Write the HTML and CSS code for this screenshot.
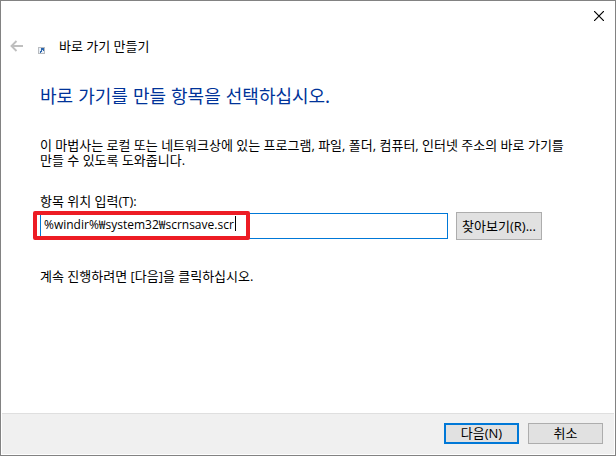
FILE: index.html
```html
<!DOCTYPE html>
<html lang="ko">
<head>
  <meta charset="UTF-8" />
  <meta name="viewport" content="width=device-width, initial-scale=1.0"/>
  <title>바로 가기 만들기</title>
  <link rel="stylesheet" href="styles.css">
</head>
<body>
  <form class="wizard">
    <div class="title-bar">
      <button type="button" class="close-btn" aria-label="닫기">
        <svg width="10" height="10" viewBox="0 0 10 10"><path d="M0 0L10 10M10 0L0 10" stroke="#000" stroke-width="1.2"/></svg>
      </button>
    </div>

    <header class="header">
      <button type="button" class="back-btn" aria-label="뒤로" disabled>
        <svg width="13" height="12" viewBox="0 0 13 12"><path d="M13 6H1.5M6.5 1L1.5 6L6.5 11" fill="none" stroke="#bfbfbf" stroke-width="1.9"/></svg>
      </button>
      <svg class="shortcut-icon" width="7" height="7" viewBox="0 0 7 7">
        <path d="M0 0H7V7H0Z" fill="#b9bcc0"/>
        <path d="M1 1H6V6H1Z" fill="#e9f0f8"/>
        <path d="M3 1H6V4H5V3H4V5H3V6H2V4H3Z" fill="#2b66ae"/>
      </svg>
      <span class="title">바로 가기 만들기</span>
    </header>

    <main class="content">
      <h1>바로 가기를 만들 항목을 선택하십시오.</h1>
      <p>이 마법사는 로컬 또는 네트워크상에 있는 프로그램, 파일, 폴더, 컴퓨터, 인터넷 주소의 바로 가기를 만들 수 있도록 도와줍니다.</p>

      <label for="location">항목 위치 입력(T):</label>
      <div class="input-row">
        <div class="field">
          <input type="text" id="location" value="%windir%₩system32₩scrnsave.scr" spellcheck="false" />
          <span class="highlight"><span class="caret"></span></span>
        </div>
        <button type="button" class="browse-btn">찾아보기(R)...</button>
      </div>

      <p>계속 진행하려면 [다음]을 클릭하십시오.</p>
    </main>

    <footer class="footer">
      <button type="submit" class="next-btn">다음(N)</button>
      <button type="button">취소</button>
    </footer>
  </form>
</body>
</html>
```
FILE: styles.css
```css
* {
  box-sizing: border-box;
}

body {
  margin: 0;
  background-color: #fff;
  color: #000;
  font-family: "Open Sans", "Noto Sans CJK KR", sans-serif;
  font-size: 13px;
  line-height: 15px;
}

.wizard {
  display: flex;
  flex-direction: column;
  min-height: 100vh;
  border: 1px solid #828282;
}

.title-bar {
  display: flex;
  justify-content: flex-end;
  height: 30px;
}

button {
  height: 21px;
  width: 75px;
  padding: 0;
  border: 1px solid #adadad;
  background-color: #e1e1e1;
  color: #000;
  font: inherit;
}

.close-btn,
.back-btn {
  display: flex;
  align-items: center;
  justify-content: center;
  border: none;
  background: none;
}

.close-btn {
  width: 32px;
  height: 30px;
}

.back-btn {
  width: 30px;
  height: 30px;
}

.header {
  display: flex;
  align-items: center;
  height: 30px;
}

.shortcut-icon {
  margin: 8px 14px 0 7px;
}

.content {
  flex: 1;
  padding: 22px 39px;
}

h1 {
  margin: 0 0 31px;
  color: #003399;
  font-family: "Noto Sans CJK KR", sans-serif;
  font-size: 18px;
  font-weight: normal;
  line-height: 24px;
}

p {
  margin: 0;
}

label {
  display: block;
  margin: 26px 0 3px;
}

.input-row {
  display: flex;
  align-items: center;
  gap: 8px;
  margin-bottom: 29px;
  padding-right: 34px;
}

.field {
  position: relative;
  flex: 1;
}

input {
  display: block;
  width: 100%;
  height: 26px;
  padding: 0 3px 4px;
  border: 1px solid #0078d7;
  outline: none;
  color: #000;
  font: inherit;
  font-size: 12px;
}

.highlight {
  position: absolute;
  top: -2px;
  left: -7px;
  width: 217px;
  height: 29px;
  border: 4px solid #ed1c24;
  border-radius: 2px;
  pointer-events: none;
}

.caret {
  position: absolute;
  top: 1px;
  right: 10px;
  width: 1px;
  height: 15px;
  background-color: #000;
}

.browse-btn {
  width: 86px;
  height: 28px;
}

.footer {
  display: flex;
  justify-content: flex-end;
  gap: 9px;
  margin: 0 1px 1px;
  padding: 9px 11px 10px;
  border-top: 1px solid #dfdfdf;
  background-color: #f0f0f0;
}

.next-btn {
  border: 2px solid #0078d7;
}
```
